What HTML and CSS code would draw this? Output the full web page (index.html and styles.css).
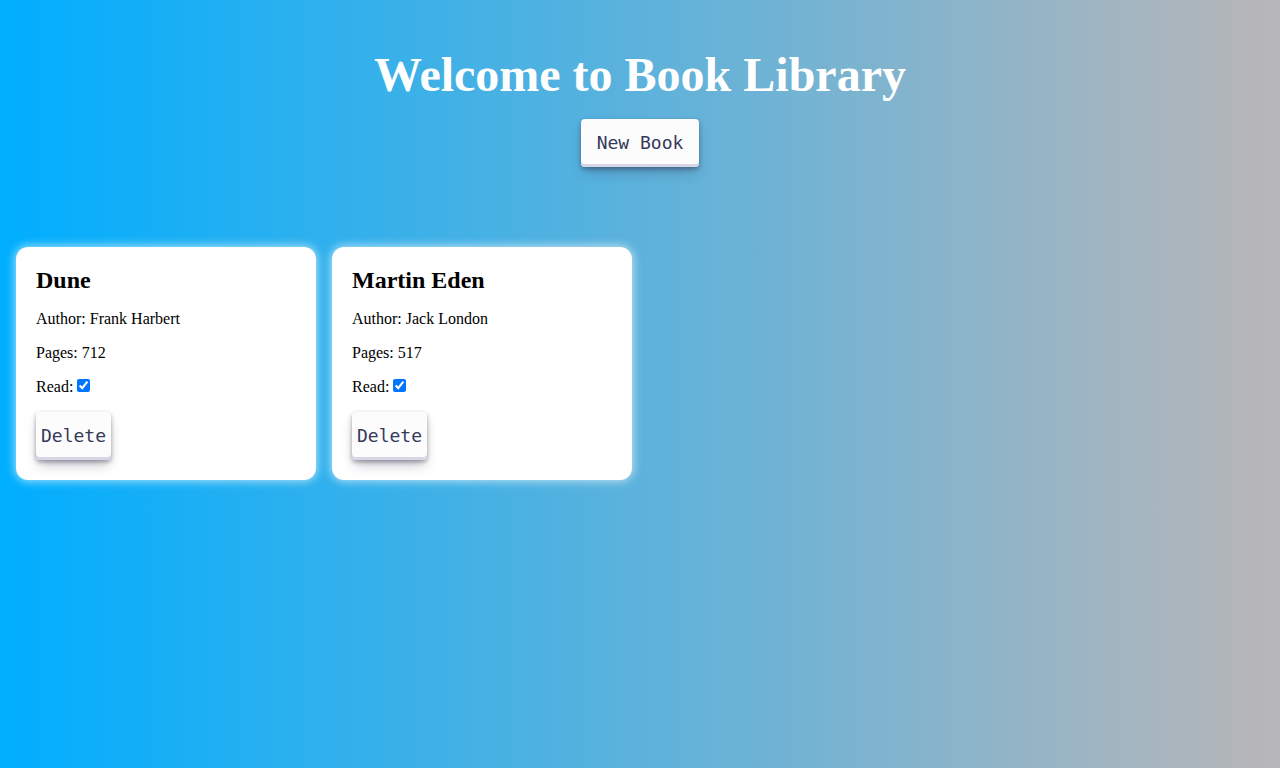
FILE: index.html
```html
<!DOCTYPE html>
<html lang="en">
<head>
<meta charset="utf-8">
<title>Book Library</title>
<link rel="stylesheet" href="styles.css">
</head>
<body>
<header class="header">
  <h1 class="title">Welcome to Book Library</h1>
  <button class="btn btn-new" type="button">New Book</button>
</header>
<main class="library">
  <div class="card">
    <h2 class="card-title">Dune</h2>
    <p class="card-line">Author: Frank Harbert</p>
    <p class="card-line">Pages: 712</p>
    <p class="card-line">Read: <input class="check" type="checkbox" checked></p>
    <button class="btn btn-delete" type="button">Delete</button>
  </div>
  <div class="card">
    <h2 class="card-title">Martin Eden</h2>
    <p class="card-line">Author: Jack London</p>
    <p class="card-line">Pages: 517</p>
    <p class="card-line">Read: <input class="check" type="checkbox" checked></p>
    <button class="btn btn-delete" type="button">Delete</button>
  </div>
</main>
</body>
</html>
```

FILE: styles.css
```css
html, body {
  margin: 0;
  padding: 0;
}

body {
  min-height: 768px;
  background: linear-gradient(to right, #00aeff 0%, #b9b6b8 100%);
  font-family: "Liberation Serif", "Times New Roman", serif;
  color: #000;
}

.header {
  display: flex;
  flex-direction: column;
  align-items: center;
  padding-top: 47px;
  gap: 17px;
}

.title {
  margin: 0;
  font-size: 48px;
  font-weight: bold;
  color: #fff;
}

.btn {
  appearance: none;
  box-sizing: border-box;
  border: 0;
  border-radius: 4px;
  background: #fcfcfd;
  color: #36395a;
  font-family: "DejaVu Sans Mono", "Liberation Mono", monospace;
  font-size: 18px;
  height: 48px;
  line-height: 1;
  white-space: nowrap;
  padding-top: 1px;
  box-shadow: rgba(45, 35, 66, 0.4) 0 2px 4px,
              rgba(45, 35, 66, 0.3) 0 7px 13px -3px,
              #d6d6e7 0 -3px 0 inset;
  cursor: pointer;
}

.btn-new {
  padding-left: 16px;
  padding-right: 16px;
}

.btn-delete {
  padding-left: 5px;
  padding-right: 5px;
}

.library {
  display: flex;
  flex-wrap: wrap;
  gap: 16px;
  padding: 80px 16px 0;
}

.card {
  width: 300px;
  box-sizing: border-box;
  background: #fff;
  border-radius: 12px;
  padding: 20px 20px 20px;
  box-shadow: 0 0 10px 1px rgba(255, 255, 255, 0.65);
}

.card-title {
  margin: 0 0 16px;
  font-size: 24px;
  font-weight: bold;
}

.card-line {
  margin: 16px 0;
  font-size: 16px;
}

.check {
  margin: 0;
  width: 13px;
  height: 13px;
  vertical-align: 0;
}
```
